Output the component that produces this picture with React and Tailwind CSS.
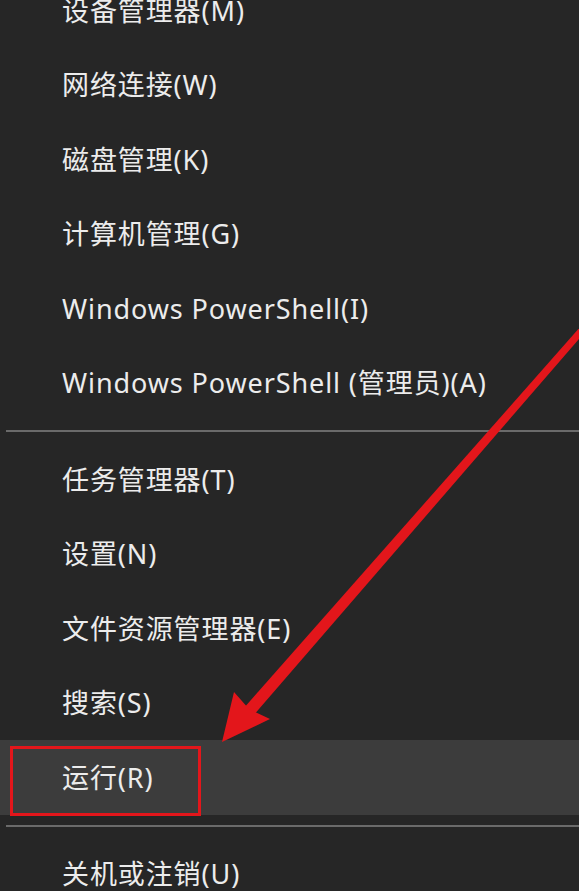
const grupoUno = [
  "设备管理器(M)",
  "网络连接(W)",
  "磁盘管理(K)",
  "计算机管理(G)",
  "Windows PowerShell(I)",
  "Windows PowerShell (管理员)(A)",
];

const grupoDos = ["任务管理器(T)", "设置(N)", "文件资源管理器(E)", "搜索(S)", "运行(R)"];

const Item = ({ texto, activo }) => (
  <div
    className={`flex h-[74.5px] items-center pl-[62px] ${activo ? "bg-[#3c3c3c]" : ""}`}
  >
    <span className="text-[27px] leading-none tracking-[0.9px] text-[#ececec]">{texto}</span>
  </div>
);

const Separador = () => (
  <div className="flex h-[22px] items-center pl-[6px]">
    <div className="h-[2px] w-full bg-[#6a6a6a]" />
  </div>
);

export default function App() {
  return (
    <div
      className="relative h-[891px] w-full overflow-hidden bg-[#262626]"
      style={{ fontFamily: '"Noto Sans", "Noto Sans CJK SC", sans-serif' }}
    >
      <div className="-mt-[27px] flex flex-col">
        {grupoUno.map((t) => (
          <Item key={t} texto={t} />
        ))}
        <Separador />
        {grupoDos.map((t) => (
          <Item key={t} texto={t} activo={t === "运行(R)"} />
        ))}
        <Separador />
        <Item texto="关机或注销(U)" />
      </div>

      {/* recuadro y flecha roja */}
      <svg className="pointer-events-none absolute inset-0" width="579" height="891" viewBox="0 0 579 891">
        <rect x="11.5" y="747.5" width="188" height="67" fill="none" stroke="#e3161b" strokeWidth="3" />
        <polygon points="588,318 592,324 252,717 243,709" fill="#e3161b" />
        <polygon points="222,742 234,692 249,709 270,719" fill="#e3161b" />
      </svg>
    </div>
  );
}
